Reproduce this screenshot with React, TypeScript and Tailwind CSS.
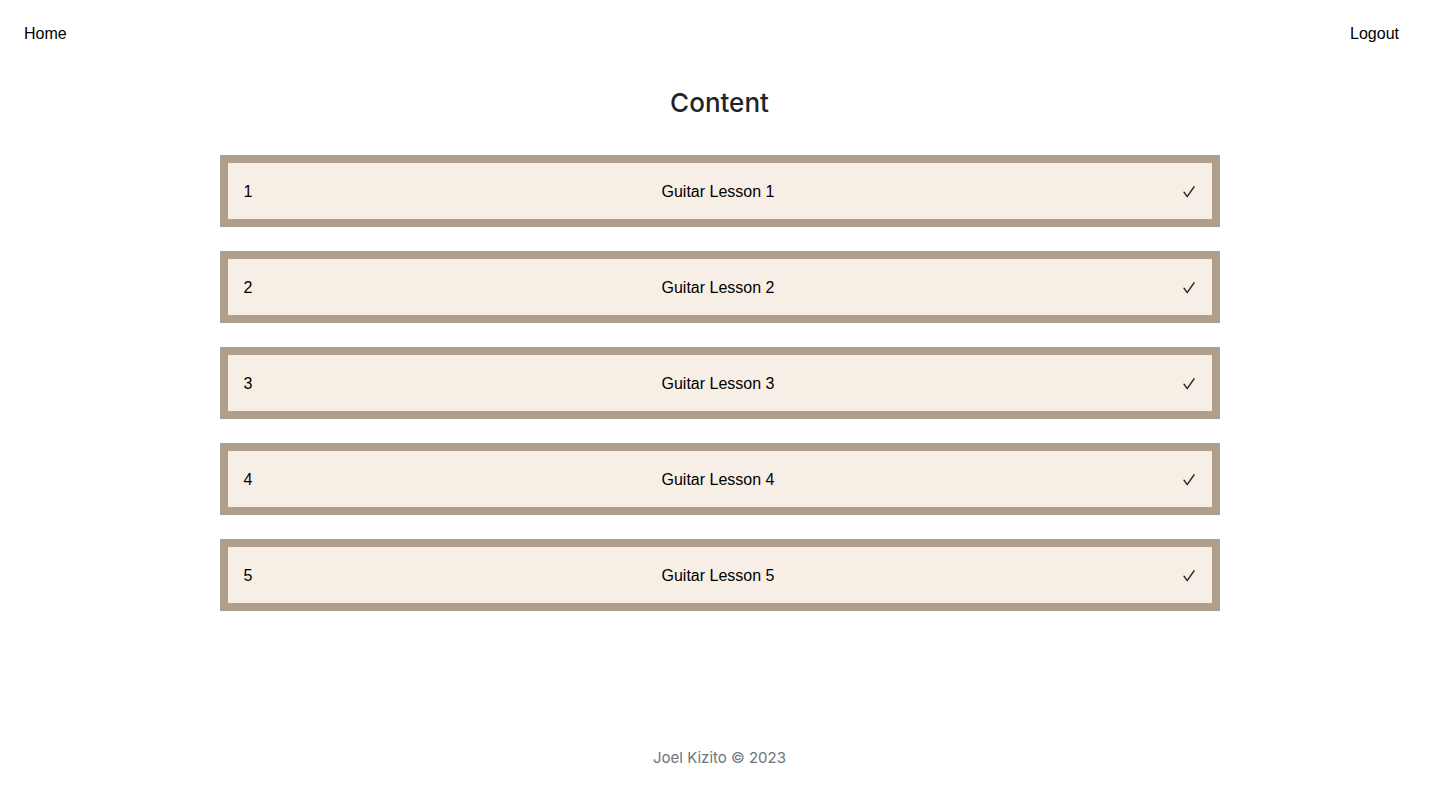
const lessons = [1, 2, 3, 4, 5];

function Nav() {
    return (
        <nav className="flex items-center justify-between h-[67px] pl-6 pr-10 font-['Liberation_Sans',Arial,sans-serif] text-base text-black">
            <a href="/">Home</a>
            <a href="/logout">Logout</a>
        </nav>
    );
}

function Check() {
    return (
        <svg width="12" height="12" viewBox="0 0 12 12" fill="none" stroke="#222" strokeWidth="1.4" strokeLinecap="round" strokeLinejoin="round">
            <path d="M1 6.2 L4.2 10.6 L11 0.8" />
        </svg>
    );
}

function LessonRow({n}: {n: number}) {
    return (
        <div className="flex items-center justify-between h-[72px] border-8 border-[#b19d8b] bg-[#f7eee6] pl-4 pr-[17px] pt-[2px] font-['Liberation_Sans',Arial,sans-serif] text-base text-black">
            <span className="w-12">{n}</span>
            <span className="-ml-[2px]">Guitar Lesson {n}</span>
            <span className="w-12 flex justify-end">
                <Check />
            </span>
        </div>
    );
}

export default function App() {
    return (
        <div className="min-h-[786px] flex flex-col bg-white">
            <Nav />
            <main className="flex-1 flex flex-col items-center">
                <h2 className="mt-[17px] mb-[33px] text-[26px] leading-[38px] font-medium text-[#212529] font-['Inter',sans-serif]">
                    Content
                </h2>
                <div className="w-[1000px] flex flex-col gap-6">
                    {lessons.map((n) => (
                        <LessonRow key={n} n={n} />
                    ))}
                </div>
            </main>
            <footer className="h-[40px] flex items-start justify-center text-[15px] leading-6 text-[#6c757d] font-['Inter',sans-serif]">
                Joel Kizito © 2023
            </footer>
        </div>
    );
}
